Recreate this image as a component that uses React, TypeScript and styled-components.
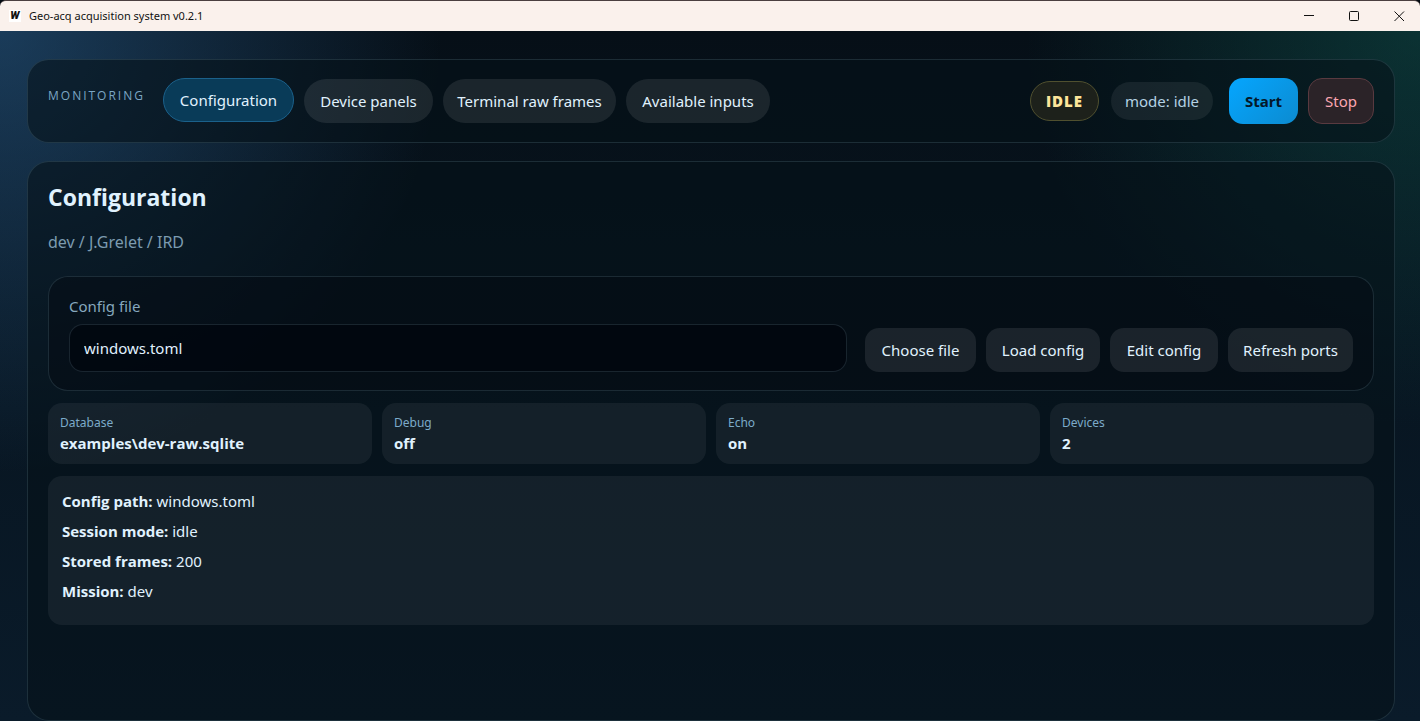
import React, { useState } from "react";
import styled, { createGlobalStyle, css } from "styled-components";

const GlobalStyle = createGlobalStyle`
  *, *::before, *::after { box-sizing: border-box; }
  body {
    margin: 0;
    background: #040b12;
    color: #e0f2fe;
    font-family: "Segoe UI", "Noto Sans", "Open Sans", sans-serif;
    font-size: 15px;
    line-height: 22px;
  }
  button, input { font: inherit; color: inherit; }
  h2, p, dl, dd { margin: 0; }
  h2, dd, strong { font-family: "Segoe UI", "Open Sans", sans-serif; }
`;

const Window = styled.div`
  display: flex;
  flex-direction: column;
  min-height: 100vh;
`;

const TitleBar = styled.div`
  display: flex;
  align-items: center;
  height: 31px;
  padding: 0 15px 0 9px;
  border-top: 1px solid #4a3f40;
  border-radius: 6px 6px 0 0;
  background: #faf1ec;
  color: #111;
`;

const AppMark = styled.span`
  width: 12px;
  height: 12px;
  margin-right: 8px;
  background: #fff;
  font: italic 900 11px/12px Roboto, sans-serif;
  text-align: center;
`;

const WindowTitle = styled.span`
  flex: 1;
  font-size: 11px;
  line-height: 16px;
`;

const WindowControls = styled.div`
  display: flex;
  gap: 34px;
`;

const ControlButton = styled.button`
  display: flex;
  width: 11px;
  height: 11px;
  padding: 0;
  border: 0;
  background: none;
`;

const Page = styled.main`
  flex: 1;
  display: flex;
  flex-direction: column;
  gap: 18px;
  padding: 28px 25px 0 27px;
  background:
    radial-gradient(circle at top left, rgba(50, 112, 168, 0.46), transparent 28%),
    radial-gradient(circle at top right, rgba(20, 112, 100, 0.36), transparent 25%),
    linear-gradient(180deg, #060f17 0%, #081622 55%, #0a1b2a 100%);
`;

const surface = css`
  border: 1px solid rgba(148, 190, 210, 0.16);
  border-radius: 22px;
  background: rgba(5, 17, 24, 0.58);
`;

const Header = styled.header`
  ${surface}
  display: flex;
  align-items: center;
  padding: 18px 20px;
`;

const Brand = styled.span`
  align-self: flex-start;
  width: 115px;
  padding-top: 8px;
  color: #7ba6c4;
  font-family: "Segoe UI", "Open Sans", sans-serif;
  font-size: 12px;
  line-height: 20px;
  letter-spacing: 2px;
`;

const Tabs = styled.nav`
  display: flex;
  flex: 1;
  gap: 10px;
`;

const Tab = styled.button<{ $active: boolean; $width: number }>`
  min-width: ${({ $width }) => $width}px;
  height: 44px;
  padding: 0 10px;
  border: 1px solid transparent;
  border-radius: 22px;
  background: rgba(255, 255, 255, 0.09) border-box;
  white-space: nowrap;
  ${({ $active }) =>
    $active &&
    css`
      border-color: #1b618b;
      background: #093b58;
      transform: translateY(-1px);
    `}
`;

const Status = styled.div`
  display: flex;
  align-items: center;
  gap: 12px;
  margin-right: 16px;
`;

const StateBadge = styled.span`
  min-width: 69px;
  padding: 8px 14px;
  border: 1px solid #50502f;
  border-radius: 20px;
  background: #1d211b;
  color: #fde59a;
  font-family: "Segoe UI", "Open Sans", sans-serif;
  font-weight: 800;
  letter-spacing: 1px;
  text-align: center;
`;

const ModeBadge = styled.span`
  min-width: 102px;
  padding: 8px 12px;
  border-radius: 20px;
  background: rgba(255, 255, 255, 0.07);
  color: #b4d2e4;
  text-align: center;
`;

const ButtonRow = styled.div`
  display: flex;
  gap: 10px;
`;

const Button = styled.button<{ $kind?: "start" | "stop"; $width: number }>`
  min-width: ${({ $width }) => $width}px;
  height: ${({ $kind }) => ($kind ? 46 : 44)}px;
  padding: 0 10px;
  border: 0;
  border-radius: 14px;
  background: rgba(255, 255, 255, 0.09);
  white-space: nowrap;
  ${({ $kind }) =>
    $kind === "start" &&
    css`
      background: linear-gradient(135deg, #05a6ff, #0c8bd0);
      color: #04182a;
      font-family: "Segoe UI", "Open Sans", sans-serif;
      font-weight: 700;
    `}
  ${({ $kind }) =>
    $kind === "stop" &&
    css`
      border: 1px solid #593a40;
      background: #2b2328;
      color: #fba6b1;
    `}
`;

const Panel = styled.section`
  ${surface}
  flex: 1;
  padding: 20px;
`;

const Heading = styled.h2`
  font-size: 23px;
  line-height: 30px;
`;

const Subtitle = styled.p`
  margin: 18px 0 22px;
  color: #7c9bb0;
  font-size: 16px;
  line-height: 24px;
`;

const FileCard = styled.form`
  display: flex;
  align-items: flex-end;
  gap: 18px;
  padding: 18px 20px;
  border: 1px solid rgba(148, 190, 210, 0.16);
  border-radius: 20px;
  background: rgba(3, 10, 18, 0.5);
`;

const Field = styled.label`
  display: flex;
  flex: 1;
  flex-direction: column;
  gap: 7px;
  color: #86a8be;
`;

const TextInput = styled.input`
  width: 100%;
  height: 48px;
  padding: 0 14px;
  border: 1px solid rgba(148, 190, 210, 0.16);
  border-radius: 14px;
  outline: 0;
  background: rgba(0, 6, 14, 0.75);
  color: #e0f2fe;
`;

const Stats = styled.dl`
  display: grid;
  grid-template-columns: repeat(4, 1fr);
  gap: 10px;
  margin: 12px 0;
`;

const Stat = styled.div`
  padding: 10px 12px;
  border-radius: 14px;
  background: rgba(255, 255, 255, 0.06);
`;

const StatLabel = styled.dt`
  color: #7cabc9;
  font-size: 12px;
  line-height: 19px;
`;

const StatValue = styled.dd`
  font-weight: 700;
`;

const Details = styled.div`
  display: flex;
  flex-direction: column;
  gap: 8px;
  padding: 14px 14px 23px;
  border-radius: 14px;
  background: rgba(255, 255, 255, 0.06);
`;

const tabs = [
  { name: "Configuration", width: 131 },
  { name: "Device panels", width: 129 },
  { name: "Terminal raw frames", width: 173 },
  { name: "Available inputs", width: 144 },
];
const fileActions = [
  { name: "Choose file", width: 111 },
  { name: "Load config", width: 114 },
  { name: "Edit config", width: 108 },
  { name: "Refresh ports", width: 125 },
];
const stats = [
  ["Database", "examples\\dev-raw.sqlite"],
  ["Debug", "off"],
  ["Echo", "on"],
  ["Devices", "2"],
];
const details = [
  ["Config path:", "windows.toml"],
  ["Session mode:", "idle"],
  ["Stored frames:", "200"],
  ["Mission:", "dev"],
];

export default function App() {
  const [active, setActive] = useState("Configuration");
  const [path, setPath] = useState("windows.toml");

  return (
    <Window>
      <GlobalStyle />
      <TitleBar>
        <AppMark aria-hidden="true">W</AppMark>
        <WindowTitle>Geo-acq acquisition system v0.2.1</WindowTitle>
        <WindowControls>
          <ControlButton aria-label="Minimize">
            <svg width="11" height="11" stroke="#111" fill="none">
              <path d="M0 4.5h10" />
            </svg>
          </ControlButton>
          <ControlButton aria-label="Maximize">
            <svg width="11" height="11" stroke="#111" fill="none">
              <rect x="0.5" y="0.5" width="9" height="9" rx="1" />
            </svg>
          </ControlButton>
          <ControlButton aria-label="Close">
            <svg width="11" height="11" stroke="#111" fill="none">
              <path d="M0.5 0.5l9.5 9.5M10 0.5l-9.5 9.5" />
            </svg>
          </ControlButton>
        </WindowControls>
      </TitleBar>
      <Page>
        <Header>
          <Brand>MONITORING</Brand>
          <Tabs>
            {tabs.map(({ name, width }) => (
              <Tab key={name} $active={name === active} $width={width} onClick={() => setActive(name)}>
                {name}
              </Tab>
            ))}
          </Tabs>
          <Status>
            <StateBadge>IDLE</StateBadge>
            <ModeBadge>mode: idle</ModeBadge>
          </Status>
          <ButtonRow>
            <Button $kind="start" $width={69}>Start</Button>
            <Button $kind="stop" $width={66}>Stop</Button>
          </ButtonRow>
        </Header>
        <Panel>
          <Heading>Configuration</Heading>
          <Subtitle>dev / J.Grelet / IRD</Subtitle>
          <FileCard onSubmit={(event) => event.preventDefault()}>
            <Field>
              Config file
              <TextInput type="text" value={path} onChange={(event) => setPath(event.target.value)} />
            </Field>
            <ButtonRow>
              {fileActions.map(({ name, width }) => (
                <Button key={name} type="button" $width={width}>
                  {name}
                </Button>
              ))}
            </ButtonRow>
          </FileCard>
          <Stats>
            {stats.map(([label, value]) => (
              <Stat key={label}>
                <StatLabel>{label}</StatLabel>
                <StatValue>{value}</StatValue>
              </Stat>
            ))}
          </Stats>
          <Details>
            {details.map(([label, value]) => (
              <p key={label}>
                <strong>{label}</strong> {value}
              </p>
            ))}
          </Details>
        </Panel>
      </Page>
    </Window>
  );
}
